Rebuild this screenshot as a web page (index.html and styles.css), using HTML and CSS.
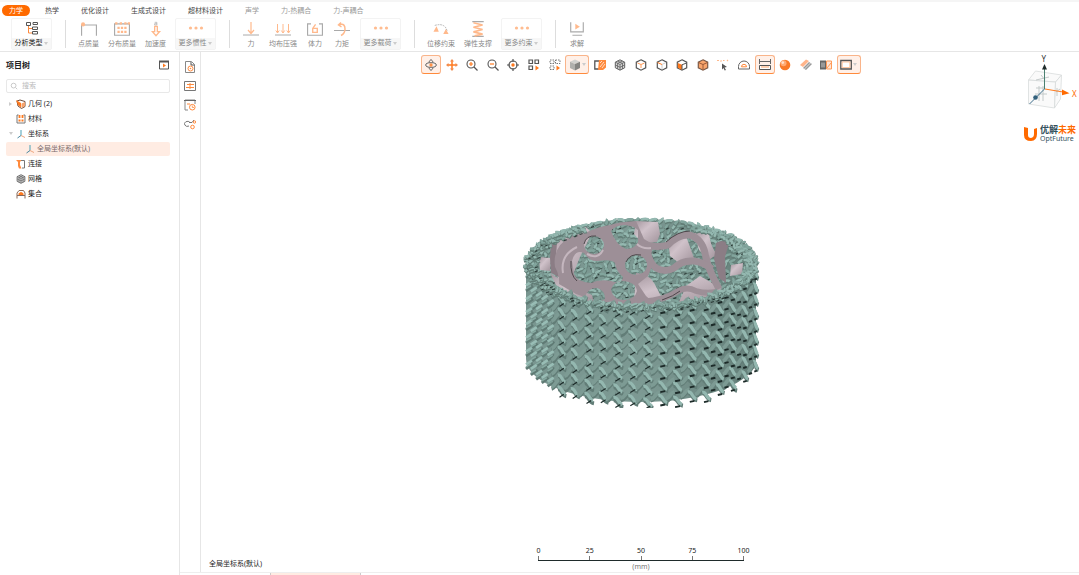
FILE: index.html
```
<!DOCTYPE html>
<html lang="zh-CN">
<head>
  <meta charset="UTF-8" />
  <meta name="viewport" content="width=device-width, initial-scale=1.0" />
  <title>优解未来</title>
  <link rel="stylesheet" href="styles.css">
</head>
<body>
  <!-- icon sprite -->
  <svg class="sprite" aria-hidden="true">
    <symbol id="i-type" viewBox="0 0 14 14"><g fill="none" stroke="#555"><path d="M1.500 1.500h4v3h-4zM8 1.500h4.500v2H8zM7.500 6h5v2.500h-5zM7.500 10.500h5v2.500h-5z"/><path stroke="#ff8a3c" d="M3.500 5v7h3.500M3.500 7.500h3.500"/></g></symbol>
    <symbol id="i-point" viewBox="0 0 14 14"><path d="M.5 13V3.500h13V13" fill="none" stroke="#aaa"/><circle cx="1.800" cy="3" r="1.800" fill="#ffb98c"/></symbol>
    <symbol id="i-dist" viewBox="0 0 14 14"><path d="M.5 12.500v-10h13v10z" fill="none" stroke="#aaa"/><path d="M1 2h2M5 2h2M9 2h2M12 2h2M3 6h2M6 6h2M9 6h2M3 9.500h2M6 9.500h2M9 9.500h2" stroke="#ffb98c" stroke-width="2"/></symbol>
    <symbol id="i-acc" viewBox="0 0 10 18"><path d="M3.500 1.500h2.500v3H3.500v-1.500h2.500" fill="none" stroke="#aaa" stroke-width=".8"/><path d="M3.500 6h3v6H9l-4 4.500L1 12h2.500z" fill="none" stroke="#ffb98c" stroke-width="1.500"/></symbol>
    <symbol id="i-dots" viewBox="0 0 16 14"><g fill="#ffbc90"><circle cx="2.500" cy="7" r="1.600"/><circle cx="8" cy="7" r="1.600"/><circle cx="13.500" cy="7" r="1.600"/></g></symbol>
    <symbol id="i-force" viewBox="0 0 16 14"><path d="M0 13h16" stroke="#aaa"/><path d="M8 0v11M5 8l3 3.500L11 8" fill="none" stroke="#ffb98c" stroke-width="1.200"/></symbol>
    <symbol id="i-press" viewBox="0 0 16 14"><path d="M0 13h16" stroke="#aaa"/><path d="M2.500 2v9M8 2v9M13.500 2v9M.8 8.500l1.700 2.500 1.700-2.500M6.300 8.500L8 11l1.700-2.500M11.800 8.500l1.700 2.500 1.700-2.500" fill="none" stroke="#ffb98c"/></symbol>
    <symbol id="i-body" viewBox="0 0 14 14"><path d="M3.500 2.500h-3v10h13v-10h-3" fill="none" stroke="#aaa"/><path d="M7.500 3L5 6.500v3.500h4V6.500H5.500" fill="none" stroke="#ffb98c" stroke-width="1.200"/></symbol>
    <symbol id="i-moment" viewBox="0 0 16 14"><path d="M0 8.500h16" stroke="#aaa"/><path d="M7 .5L4.500 3l3 2M5 3c5-2 6 1 6 4s-1 5-4 6.500" fill="none" stroke="#ffb98c" stroke-width="1.500"/></symbol>
    <symbol id="i-disp" viewBox="0 0 18 14"><path d="M2 3q8-2.500 12 2l2 4" fill="none" stroke="#aaa" stroke-dasharray="2 1"/><path d="M4 4l2.500 6H.5zM14.500 7l3 5.500h-6z" fill="#ffb98c"/></symbol>
    <symbol id="i-spring" viewBox="0 0 12 14"><path d="M1 .5h10M1 13.500h10" stroke="#aaa"/><path d="M2 1.500l8 2-8 2 8 2-8 2 8 2-7 1.500" fill="none" stroke="#ffb98c" stroke-width="1.400"/></symbol>
    <symbol id="i-solve" viewBox="0 0 14 14"><path d="M1.500 1v8.500h11V1M3 12.500h8.500" fill="none" stroke="#aaa"/><path d="M5.500 2.500v5L9.500 5z" fill="#ffb98c"/></symbol>

    <symbol id="i-play" viewBox="0 0 10 10"><path d="M.5 1.500h9v7.500h-9z" fill="none" stroke="#555"/><path d="M0 1.500h10" stroke="#555" stroke-width="2"/><path d="M4 3.500v4l3-2z" fill="#ff7a1f"/></symbol>
    <symbol id="i-search" viewBox="0 0 10 10"><circle cx="4.500" cy="4.500" r="3" fill="none" stroke="#bbb"/><path d="M7 7l2 2" stroke="#bbb"/></symbol>
    <symbol id="i-geo" viewBox="0 0 10 10"><path d="M1 2l3-1 5 1.500v5L5.500 9.500 2 7z" fill="#fff" stroke="#6d4a38"/><path d="M0 1L5 4v4.500L2 6z" fill="#ff7a1f"/><path d="M5.500 4.500L9 3v4L5.500 9z" fill="#f5a26c"/></symbol>
    <symbol id="i-mat" viewBox="0 0 10 10"><path d="M2.500 1H1v8h8V1H7.500" fill="none" stroke="#777"/><path d="M3.500 1v3M6.500 1v3M2.500 6.500h2M5.500 6.500h2" stroke="#ff7a1f" stroke-width="1.800"/></symbol>
    <symbol id="i-axis" viewBox="0 0 10 10"><path d="M5 1v5.500" stroke="#4aa0b5" fill="none"/><path d="M5 6.500L1.500 9" stroke="#4a87a0"/><path d="M5 6.500L9 8.500" stroke="#f0a880"/></symbol>
    <symbol id="i-link" viewBox="0 0 10 10"><path d="M5 1.500h3.500V9H6" fill="none" stroke="#777"/><path d="M0 1h5.500L4 3v3l1.500 3.500H3L2 7V3z" fill="#ff8a3c"/></symbol>
    <symbol id="i-mesh" viewBox="0 0 12 12"><path d="M6 .8l4.700 2.400v5.600L6 11.200 1.300 8.800V3.200z" fill="#d5d5d5" stroke="#555" stroke-width=".9"/><path d="M1.500 3.200L6 5.500l4.500-2.300M6 5.500V11M3.700 2L8.500 4.400v5.500M8.300 2L3.600 4.400v5.500M1.500 6L6 8.300 10.500 6" fill="none" stroke="#555" stroke-width=".7"/></symbol>
    <symbol id="i-set" viewBox="0 0 10 10"><path d="M1 9.500V4l2-2.500h4.500L9 4v5.500M1 6.500h8" fill="none" stroke="#8a6a5a"/><path d="M2.500 6V4.500q2.500-3 5 0V6z" fill="#ff7a1f"/></symbol>

    <symbol id="i-doc" viewBox="0 0 12 12"><path d="M1.500 11.500V.5h6l3 3v8z" fill="none" stroke="#888"/><path d="M7 1v3h3.500" fill="none" stroke="#555"/><circle cx="6.500" cy="7.500" r="2.500" fill="none" stroke="#ff8a3c"/><circle cx="6.500" cy="7.500" r=".8" fill="#ff8a3c"/></symbol>
    <symbol id="i-table" viewBox="0 0 12 12"><path d="M.5 1.500h11v9H.5z" fill="none" stroke="#777"/><path d="M3 4.500h7M2 7.500h8M6 3v6" stroke="#ff8a3c"/></symbol>
    <symbol id="i-log" viewBox="0 0 12 12"><path d="M11 5V1H1v10h3" fill="none" stroke="#888"/><path d="M0 1.500h12" stroke="#666"/><path d="M3 5h3" stroke="#ff8a3c"/><circle cx="8.300" cy="8.200" r="2.800" fill="none" stroke="#ff8a3c"/><path d="M8.300 6.500v2H10" fill="none" stroke="#ff8a3c" stroke-width=".8"/></symbol>
    <symbol id="i-gear" viewBox="0 0 12 12"><path d="M6 4.500a3 2.500 0 10-1 3.500M5 4.500h3L10 2" fill="none" stroke="#777"/><circle cx="8.500" cy="9" r="1.800" fill="none" stroke="#ff8a3c"/><circle cx="10.500" cy="4" r="1.200" fill="none" stroke="#ff8a3c"/></symbol>

    <symbol id="i-rotate" viewBox="0 0 12 12"><ellipse cx="6" cy="6" rx="5.300" ry="2.300" fill="none" stroke="#666"/><path d="M4 3.500c.8-3.500 3.200-3.500 4 0M4 8.500c.8 3.500 3.200 3.500 4 0" fill="none" stroke="#555"/><path d="M6 4.200v3.600M4.200 6h3.600" stroke="#ff7a1f" stroke-width="1.200"/></symbol>
    <symbol id="i-pan" viewBox="0 0 12 12"><path d="M6 2v8M2 6h8" stroke="#ff7a1f" stroke-width="1.500"/><path d="M6 0l2 2.500H4zM6 12l2-2.500H4zM0 6l2.500-2v4zM12 6L9.500 4v4z" fill="#f08a4c"/></symbol>
    <symbol id="i-zin" viewBox="0 0 12 12"><circle cx="5" cy="5" r="4" fill="none" stroke="#555" stroke-width="1.100"/><path d="M8 8l3.500 3.500" stroke="#555" stroke-width="1.300"/><path d="M3 5h4M5 3v4" stroke="#ff7a1f" stroke-width="1.200"/></symbol>
    <symbol id="i-zout" viewBox="0 0 12 12"><circle cx="5" cy="5" r="4" fill="none" stroke="#555" stroke-width="1.100"/><path d="M8 8l3.500 3.500" stroke="#555" stroke-width="1.300"/><path d="M3 5h4" stroke="#ff7a1f" stroke-width="1.200"/></symbol>
    <symbol id="i-fit" viewBox="0 0 12 12"><circle cx="6" cy="6" r="4" fill="none" stroke="#555" stroke-width="1.200"/><path d="M6 0v3M6 9v3M0 6h3M9 6h3" stroke="#555" stroke-width="1.200"/><circle cx="6" cy="6" r="1.700" fill="#ff7a1f"/></symbol>
    <symbol id="i-sel" viewBox="0 0 12 12"><path d="M1 1h3.500v3.500H1zM7 1h3.500v3.500H7zM1 7h3.500v3.500H1z" fill="none" stroke="#555" stroke-width="1.200"/><path d="M7.500 6.500v5L11 9z" fill="#ff7a1f"/></symbol>
    <symbol id="i-sel2" viewBox="0 0 12 12"><path d="M1 1h4v3.500H1zM6.500 1H11v3.500H6.500zM1 7h4v3.500H1z" fill="none" stroke="#777" stroke-dasharray="1.500 1"/><path d="M7.500 6.500v5L11 9z" fill="#ff7a1f"/></symbol>
    <symbol id="i-solid" viewBox="0 0 12 12"><path d="M6 .5l5 2.300L6 5 1 2.800z" fill="#d2d2ce"/><path d="M1 2.800L6 5v6.500L1 9z" fill="#b0b0ac"/><path d="M11 2.800L6 5v6.500L11 9z" fill="#858581"/></symbol>
    <symbol id="i-section" viewBox="0 0 12 12"><path d="M6 2H.8v8H6" fill="none" stroke="#555" stroke-width="1.300"/><path d="M5 1h7v7.500L9 11H4z" fill="#ff8a3c"/><path d="M6 4l2-2M6 8l4-5M8 9l3-4" stroke="#fff" stroke-width=".7"/></symbol>
    <symbol id="i-cube" viewBox="0 0 12 12"><path d="M6 .8l4.700 2.400v5.600L6 11.200 1.300 8.800V3.200z" fill="#fff" stroke="#555" stroke-width="1.200"/><path d="M2.500 4L6 5.500 9.500 4M6 5.500V9" fill="none" stroke="#ff9a57"/></symbol>
    <symbol id="i-cube2" viewBox="0 0 12 12"><path d="M6 .8l4.700 2.400v5.600L6 11.200 1.300 8.800V3.200z" fill="#fff" stroke="#555" stroke-width="1.200"/><path d="M1.500 3.500L6 5.500" stroke="#ff7a1f"/><path d="M6 5.500l4-2M6 6v4" stroke="#ccc"/></symbol>
    <symbol id="i-cube3" viewBox="0 0 12 12"><path d="M6 .8l4.700 2.400v5.600L6 11.200 1.300 8.800V3.200z" fill="#fff" stroke="#555" stroke-width="1.200"/><path d="M1.800 4L6 5.800V11L1.800 8.800z" fill="#ff7a1f"/><path d="M6 5.800L10.500 4M6 5.800V11" stroke="#555"/></symbol>
    <symbol id="i-cube4" viewBox="0 0 12 12"><path d="M6 .8l4.700 2.400v5.600L6 11.200 1.300 8.800V3.200z" fill="#f9a56c" stroke="#7a5a48" stroke-width="1.200"/><path d="M1.500 3.500L6 5.500l4.500-2M6 5.500V11" fill="none" stroke="#9a5a38"/></symbol>
    <symbol id="i-probe" viewBox="0 0 12 12"><path d="M0 1.500h2M3.500 2.500l1-1M6 1.500h1.500M10 1l1 1" stroke="#ffb98c" stroke-width="1.200"/><path d="M5 4.500l5 3.500-2.500.5L9 11l-1.300.6L6.500 9 5 10.500z" fill="#555"/></symbol>
    <symbol id="i-protr" viewBox="0 0 12 12"><path d="M.5 10V7.500a5.500 5.500 0 0111 0V10z" fill="none" stroke="#666"/><path d="M3.500 7.800a2.500 2.500 0 015 0z" fill="none" stroke="#ff8a3c"/></symbol>
    <symbol id="i-ruler" viewBox="0 0 12 12"><path d="M.5 0v5M11.500 0v5M.5 2.500h11" stroke="#666"/><path d="M.5 6.500h11v4H.5z" fill="#fff" stroke="#555"/><path d="M3 7v2M5 7v2M7 7v2M9 7v2" stroke="#ff8a3c" stroke-width=".8"/></symbol>
    <symbol id="i-ball" viewBox="0 0 12 12"><circle cx="6" cy="6" r="5.300" fill="#f97a28"/><circle cx="4.500" cy="4.300" r="3" fill="#ffab74"/><circle cx="3.800" cy="3.600" r="1.300" fill="#ffe2cf"/></symbol>
    <symbol id="i-clip" viewBox="0 0 12 12"><path d="M0 6l6-5.500L9 2 3 8z" fill="#ffb48a"/><path d="M3 9l6-6 3 2-6 6z" fill="#999"/><path d="M4.500 10l6-6" stroke="#fff" stroke-width=".7"/></symbol>
    <symbol id="i-half" viewBox="0 0 12 12"><path d="M0 1.500h6v9H0z" fill="#666"/><path d="M1 3.500h4v5H1z" fill="#999"/><path d="M6.500 2h5v8h-5z" fill="#ffe5d6" stroke="#ff9a57"/><path d="M7 9l4-5" stroke="#ff9a57"/></symbol>
    <symbol id="i-rect" viewBox="0 0 12 12"><path d="M.8 1.500h10.500v8.500H.8z" fill="none" stroke="#555" stroke-width="1.300"/><path d="M2.200 3h7.600v5.500H2.200z" fill="#fff" stroke="#ffb98c" stroke-width=".8"/></symbol>
  </svg>

  <div class="app">
    <nav class="tabs">
      <button class="tab active">力学</button>
      <button class="tab">热学</button>
      <button class="tab">优化设计</button>
      <button class="tab">生成式设计</button>
      <button class="tab">超材料设计</button>
      <button class="tab" disabled>声学</button>
      <button class="tab" disabled>力-热耦合</button>
      <button class="tab" disabled>力-声耦合</button>
    </nav>

    <div class="ribbon">
      <button class="tool boxed current"><svg><use href="#i-type"/></svg><span>分析类型 <i class="caret"></i></span></button>
      <div class="sep"></div>
      <button class="tool"><svg><use href="#i-point"/></svg><span>点质量</span></button>
      <button class="tool"><svg><use href="#i-dist"/></svg><span>分布质量</span></button>
      <button class="tool"><svg><use href="#i-acc"/></svg><span>加速度</span></button>
      <button class="tool boxed"><svg><use href="#i-dots"/></svg><span>更多惯性 <i class="caret"></i></span></button>
      <div class="sep"></div>
      <button class="tool"><svg><use href="#i-force"/></svg><span>力</span></button>
      <button class="tool"><svg><use href="#i-press"/></svg><span>均布压强</span></button>
      <button class="tool"><svg><use href="#i-body"/></svg><span>体力</span></button>
      <button class="tool"><svg><use href="#i-moment"/></svg><span>力矩</span></button>
      <button class="tool boxed"><svg><use href="#i-dots"/></svg><span>更多载荷 <i class="caret"></i></span></button>
      <div class="sep"></div>
      <button class="tool"><svg><use href="#i-disp"/></svg><span>位移约束</span></button>
      <button class="tool"><svg><use href="#i-spring"/></svg><span>弹性支撑</span></button>
      <button class="tool boxed"><svg><use href="#i-dots"/></svg><span>更多约束 <i class="caret"></i></span></button>
      <div class="sep"></div>
      <button class="tool"><svg><use href="#i-solve"/></svg><span>求解</span></button>
    </div>

    <div class="main">
      <aside class="sidebar">
        <div class="side-head">
          <h2>项目树</h2>
          <button class="icon-btn" aria-label="收起"><svg><use href="#i-play"/></svg></button>
        </div>
        <label class="search">
          <svg><use href="#i-search"/></svg>
          <input type="search" placeholder="搜索" aria-label="搜索" />
        </label>
        <ul class="tree">
          <li><i class="arrow right"></i><svg><use href="#i-geo"/></svg><span>几何 (2)</span></li>
          <li><i class="arrow"></i><svg><use href="#i-mat"/></svg><span>材料</span></li>
          <li><i class="arrow down"></i><svg><use href="#i-axis"/></svg><span>坐标系</span></li>
          <li class="child selected"><i class="arrow"></i><svg><use href="#i-axis"/></svg><span>全局坐标系(默认)</span></li>
          <li><i class="arrow"></i><svg><use href="#i-link"/></svg><span>连接</span></li>
          <li><i class="arrow"></i><svg><use href="#i-mesh"/></svg><span>网格</span></li>
          <li><i class="arrow"></i><svg><use href="#i-set"/></svg><span>集合</span></li>
        </ul>
      </aside>

      <div class="workspace">
        <div class="stage">
          <div class="rail">
            <button class="icon-btn" aria-label="属性"><svg><use href="#i-doc"/></svg></button>
            <button class="icon-btn" aria-label="表格"><svg><use href="#i-table"/></svg></button>
            <button class="icon-btn" aria-label="日志"><svg><use href="#i-log"/></svg></button>
            <button class="icon-btn" aria-label="设置"><svg><use href="#i-gear"/></svg></button>
          </div>

          <section class="viewport">
            <div class="view-tools">
              <button class="vt on" aria-label="旋转"><svg><use href="#i-rotate"/></svg></button>
              <button class="vt" aria-label="平移"><svg><use href="#i-pan"/></svg></button>
              <button class="vt" aria-label="放大"><svg><use href="#i-zin"/></svg></button>
              <button class="vt" aria-label="缩小"><svg><use href="#i-zout"/></svg></button>
              <button class="vt" aria-label="适应"><svg><use href="#i-fit"/></svg></button>
              <button class="vt" aria-label="选择"><svg><use href="#i-sel"/></svg></button>
              <button class="vt" aria-label="框选"><svg><use href="#i-sel2"/></svg></button>
              <button class="vt drop on" aria-label="显示"><svg><use href="#i-solid"/></svg><i class="caret"></i></button>
              <button class="vt" aria-label="剖面"><svg><use href="#i-section"/></svg></button>
              <button class="vt" aria-label="网格"><svg><use href="#i-mesh"/></svg></button>
              <button class="vt" aria-label="点"><svg><use href="#i-cube"/></svg></button>
              <button class="vt" aria-label="线"><svg><use href="#i-cube2"/></svg></button>
              <button class="vt" aria-label="面"><svg><use href="#i-cube3"/></svg></button>
              <button class="vt" aria-label="体"><svg><use href="#i-cube4"/></svg></button>
              <button class="vt" aria-label="坐标"><svg><use href="#i-probe"/></svg></button>
              <button class="vt" aria-label="角度"><svg><use href="#i-protr"/></svg></button>
              <button class="vt on" aria-label="标尺"><svg><use href="#i-ruler"/></svg></button>
              <button class="vt" aria-label="光照"><svg><use href="#i-ball"/></svg></button>
              <button class="vt" aria-label="纹理"><svg><use href="#i-clip"/></svg></button>
              <button class="vt" aria-label="对比"><svg><use href="#i-half"/></svg></button>
              <button class="vt drop on" aria-label="背景"><svg><use href="#i-rect"/></svg><i class="caret"></i></button>
            </div>

            <div class="corner">
              <svg class="gizmo" viewBox="1024 54 54 56">
                <g fill="#f6f7f7" fill-opacity=".6" stroke="#d8dcdc" stroke-width=".8">
                  <path d="M1028.500 80l7-9 26 4-6 7z"/>
                  <path d="M1028.500 80l27 2-1 26-26-4z"/>
                  <path d="M1055.500 82l6-7-1 24-6 9z"/>
                </g>
                <path d="M1036 80l13-3M1041 75l4 5M1036 88h9M1035 94h12M1039 86v15M1043 86v15M1057 88v8M1056 92l4-3" stroke="#c4caca" fill="none"/>
                <path d="M1044.500 89V69" stroke="#4a8070"/>
                <path d="M1044.500 64l2.500 5.500h-5z" fill="#1f2b2b"/>
                <path d="M1045 89l18 3" stroke="#ff7a1f"/>
                <path d="M1062 89.500l7.500 3.700-7.500 2z" fill="#ff6a00"/>
                <path d="M1044.500 89l-15 15" stroke="#3f6f8c"/>
                <circle cx="1035.500" cy="97.500" r="2.300" fill="#33617c"/>
                <text x="1041.500" y="62" font-size="8" fill="#333">Y</text>
                <text x="1072" y="97" font-size="8" fill="#ff6a00">X</text>
              </svg>
              <div class="brand">
                <svg viewBox="0 0 13 14"><path d="M0 0l4 1v7q0 3 3 3 3-.5 3-4V2l3-1v6q0 6.500-6 7-7 0-7-6z" fill="#ff6a00"/></svg>
                <div class="brand-text">
                  <strong>优解<em>未来</em></strong>
                  <small>OptFuture</small>
                </div>
              </div>
            </div>

            <svg class="model" id="model" viewBox="515 214 252 196">
              <defs>
                <linearGradient id="wall" x1="0" x2="1"><stop offset="0" stop-color="#78958f"/><stop offset=".5" stop-color="#7d9993"/><stop offset="1" stop-color="#647f79"/></linearGradient>
                <linearGradient id="lilac" x1="0" x2="1" y2="1"><stop offset="0" stop-color="#a3959d"/><stop offset=".4" stop-color="#d0c2ca"/><stop offset="1" stop-color="#a0929a"/></linearGradient>
              </defs>
              <path fill="url(#wall)" d="M526 266A115 45 0 01756 266V361A115 43 0 01526 361z"/>
              <g id="back"></g>
              <!-- inner lattice surface -->
              <g fill="url(#lilac)">
                <path d="M539 259l12 1-1 13-10-1z"/>
                <path d="M553 245l16-10 17-6 6 6-12 24-8 20-14 2z"/>
                <path d="M636 223l22 1 2 12-3 8-14 2-9-10z"/>
                <path d="M668 243l18-5 8 22-14 6-10-8z"/>
                <path d="M694 234l15 2q2 14 8 20l-8 6-10-10z"/>
                <path d="M731 267l12-2-1 11-12 2z"/>
                <path d="M636 275q12 0 18 10l8 15-28 4zM686 288l14-10 14 8 8 5-15 8-28 5z"/>
                <path d="M550 275l22 14 20 8 2 8-20-7-18-11z"/>
              </g>
              <path fill="#8b7d85" d="M551 247l6-3-1 15 3 20-8-4-1-15zM716 245q6-4 13 0l-4 14 1 26-7-5-5-19z"/>
              <!-- left plate with holes -->
              <path fill="#9d8f97" fill-rule="evenodd" d="M585 235q15-7 25-8 8-3 26-4l8 18 10 6-4 11 2 10-4 10-10 8 8 12 8 7-14 3q-38-2-64-12l-17-10q1-8-4-17-3-20 16-31zM584 247a10 9 0 1020 0 10 9 0 10-20 0M611 233q4-6 14-6 9 1 13 5l0 12q-3 7-12 7-10-4-15-18zM572 263q3-12 12-8 6 9 14 8 14-2 17 2 1 8 8 14-1 8-12 4-12-2-20 2-14-1-17-9zM625 267a11 10 0 1022 0 11 10 0 10-22 0M585 298q5-9 12-8 8 2 8 11l-6 3zM611 292q2-9 12-9 13 1 14 10-2 8-12 9-12 0-14-10z"/>
              <!-- ribbons on the right -->
              <g fill="none" stroke="#9d8f97" stroke-width="7" stroke-linejoin="round">
                <path d="M640 245q16 6 28 2 10-11 22-10 12 4 15 18 2 12 8 24l6 12"/>
                <path d="M648 246q-2 16 8 24 9 5 18 0 8-8 20-7 9 1 18 8"/>
                <path stroke-width="6" d="M634 304q28 0 44-11 9-5 18 0 10 3 20 1"/>
              </g>
              <path fill="none" stroke="#c4b6be" stroke-width="2" d="M563 275q-3-18 14-26M603 252q-5 10-16 4M637 246q5 5 14 4"/>
              <path fill="none" stroke="#4f484c" stroke-width="1" d="M666 244q12-11 24-11M571 263q-1 14 6 20M626 264q4-9 15-7M584 246q2-9 12-8M662 302q12-4 18-9"/>
              <g id="front"></g>
            </svg>

            <div class="view-foot">
              <span class="status">全局坐标系(默认)</span>
              <div class="scale">
                <div class="scale-nums"><span>0</span><span>25</span><span>50</span><span>75</span><span>100</span></div>
                <div class="scale-bar"><i></i><i></i><i></i><i></i><i></i></div>
                <div class="unit">(mm)</div>
              </div>
            </div>
          </section>
        </div>
        <div class="bottom-tabs"><div class="bottom-active"></div></div>
      </div>
    </div>
  </div>

  <script src="model.js"></script>
</body>
</html>
```

FILE: styles.css
```
* {
  box-sizing: border-box;
}
body {
  margin: 0;
  font-family: "Noto Sans", "Noto Sans CJK SC", sans-serif;
  font-size: 7px;
  line-height: 10px;
  color: #222;
  background: #fff;
}
button {
  margin: 0;
  padding: 0;
  border: none;
  background: none;
  font: inherit;
  color: inherit;
  cursor: pointer;
}
svg {
  display: block;
}
.sprite {
  position: absolute;
  width: 0;
  height: 0;
}
.app {
  display: flex;
  flex-direction: column;
  height: 100vh;
  overflow: hidden;
}

/* top tabs */
.tabs {
  display: flex;
  align-items: center;
  gap: 8px;
  height: 17px;
  padding: 2px 2px 0;
  border-top: 2px solid #f5f5f5;
}
.tab {
  height: 11px;
  padding: 0 7px;
  border-radius: 6px;
  color: #444;
  white-space: nowrap;
}
.tab:disabled {
  color: #999;
}
.tab.active {
  background: #ff6a00;
  color: #fff;
}

/* ribbon */
.ribbon {
  display: flex;
  align-items: center;
  gap: 9px;
  height: 35px;
  padding: 0 11px;
  border-bottom: 1px solid #e6e6e6;
}
.sep {
  width: 1px;
  height: 28px;
  margin: 0 3px 0 4px;
  background: #ddd;
}
.tool {
  display: flex;
  flex-direction: column;
  align-items: center;
  justify-content: flex-end;
  min-width: 18px;
  height: 32px;
  color: #888;
  white-space: nowrap;
}
.tool svg {
  width: 16px;
  height: 16px;
  margin-bottom: 2px;
}
.tool span {
  height: 11px;
}
.tool.boxed {
  width: 41px;
  border: 1px solid #f3f3f3;
  border-radius: 2px;
}
.tool.boxed svg {
  height: 14px;
  margin-bottom: 3px;
}
.tool.boxed span {
  width: 100%;
  background: #f7f7f7;
}
.tool.current {
  color: #222;
}
.caret {
  display: inline-block;
  border: 2px solid transparent;
  border-top: 3px solid #ccc;
  border-bottom: 0;
}

/* project tree */
.main {
  display: flex;
  flex: 1;
  min-height: 0;
}
.sidebar {
  width: 180px;
  flex: none;
  padding: 8px 9px 0 6px;
  border-right: 1px solid #e6e6e6;
}
.side-head {
  display: flex;
  align-items: center;
  justify-content: space-between;
  height: 10px;
  padding-right: 1px;
}
.side-head h2 {
  margin: 0;
  font-size: 8px;
  font-weight: bold;
}
.side-head svg {
  width: 10px;
  height: 10px;
}
.search {
  display: flex;
  align-items: center;
  gap: 4px;
  height: 14px;
  margin: 9px 0 4px;
  padding: 0 3px;
  border: 1px solid #e8e8e8;
  border-radius: 2px;
}
.search svg {
  width: 8px;
  height: 8px;
}
.search input {
  flex: 1;
  min-width: 0;
  padding: 0;
  border: none;
  outline: none;
  font: inherit;
}
.search input::placeholder {
  color: #bbb;
}
.tree {
  display: flex;
  flex-direction: column;
  gap: 1px;
  margin: 0;
  padding: 0;
  list-style: none;
}
.tree li {
  display: flex;
  align-items: center;
  height: 14px;
  padding-left: 3px;
  border-radius: 2px;
}
.tree li.child {
  padding-left: 12px;
}
.tree svg {
  width: 10px;
  height: 10px;
  margin: 0 2px;
}
.tree .selected {
  background: #ffece3;
  color: #77696a;
}
.arrow {
  width: 5px;
  height: 4px;
}
.arrow.right::before,
.arrow.down::before {
  content: "";
  display: block;
  width: 0;
  border: 2px solid transparent;
}
.arrow.right::before {
  border-left: 3px solid #ccc;
  border-right: 0;
}
.arrow.down::before {
  border-top: 3px solid #ccc;
  border-bottom: 0;
}

/* workspace */
.workspace {
  display: flex;
  flex: 1;
  flex-direction: column;
  min-width: 0;
}
.stage {
  display: flex;
  flex: 1;
  min-height: 0;
}
.rail {
  display: flex;
  flex-direction: column;
  align-items: center;
  gap: 7px;
  width: 21px;
  padding: 9px 1px 0 0;
  border-right: 1px solid #e6e6e6;
}
.rail svg {
  width: 12px;
  height: 12px;
}
.viewport {
  position: relative;
  display: flex;
  flex: 1;
  flex-direction: column;
  align-items: center;
  justify-content: space-between;
  min-width: 0;
  padding: 3px 0 0 2px;
}
.view-tools {
  display: flex;
  justify-content: space-between;
  width: 50%;
  min-width: 440px;
  max-width: 440px;
}
.vt {
  display: flex;
  align-items: center;
  justify-content: center;
  gap: 1px;
  width: 20px;
  height: 19px;
  border: 1px solid transparent;
  border-radius: 3px;
}
.vt.drop {
  width: 24px;
}
.vt svg {
  width: 12px;
  height: 12px;
}
.vt.on {
  border-color: #f9b48a;
  border-bottom-color: #ff8a3c;
  background: #fff0e8;
}
.model {
  width: 252px;
  height: 196px;
}

/* axis triad and logo lie over the 3D view */
.corner {
  position: absolute;
  top: 2px;
  right: 1px;
}
.gizmo {
  width: 54px;
  height: 56px;
}
.brand {
  display: flex;
  align-items: center;
  gap: 3px;
  margin-top: 15px;
}
.brand svg {
  width: 13px;
  height: 14px;
}
.brand-text {
  display: flex;
  flex-direction: column;
}
.brand strong {
  font-size: 9px;
  line-height: 10px;
  color: #33505c;
}
.brand em {
  font-style: normal;
  color: #ff6a00;
}
.brand small {
  font-size: 7px;
  line-height: 7px;
  color: #33505c;
}

/* status text and ruler */
.view-foot {
  display: grid;
  grid-template-columns: 1fr 218px 1fr;
  align-items: end;
  width: 100%;
}
.status {
  padding: 0 0 3px 6px;
}
.scale-nums {
  display: flex;
  justify-content: space-between;
}
.scale-nums span {
  width: 13px;
  text-align: center;
}
.scale-bar {
  display: flex;
  justify-content: space-between;
  height: 5px;
  margin: 0 6px 1px;
  border-bottom: 1px solid #1f2b2b;
}
.scale-bar i {
  width: 1px;
  background: #777;
}
.unit {
  text-align: center;
  color: #777;
}
.bottom-tabs {
  height: 3px;
  padding-left: 90px;
  border-top: 1px solid #eee;
}
.bottom-active {
  width: 91px;
  height: 2px;
  border: 1px solid #ccc;
  border-width: 0 1px;
  background: #ffece3;
}
```

FILE: model.js
```
// lattice strands of the ring
const CX = 641, RX = 114, RY = 44, TOP = 266, BOTTOM = 361;
let seed = 7;

function rnd() {
  seed = (seed * 16807) % 2147483647;
  return seed / 2147483647;
}

function n(v) {
  return v.toFixed(1);
}

function stroke(d, color, width) {
  return `<path d="${d}" fill="none" stroke="${color}" stroke-width="${n(width)}"/>`;
}

// one twisted piece of the lattice, turned at random
function knot(x, y, s) {
  const a = rnd() * Math.PI;
  const dx = Math.cos(a) * 4 * s, dy = Math.sin(a) * 2.5 * s;
  const light = rnd() > 0.4 ? '#94b8b0' : '#82a59d';
  let out = stroke(`M${n(x - dx)} ${n(y - dy + 1)}q${n(dx + 2)} ${n(dy - 2)} ${n(2 * dx)} ${n(2 * dy)}`, '#627d76', 4 * s);
  out += stroke(`M${n(x - dx)} ${n(y - dy)}q${n(dx + 2)} ${n(dy - 2)} ${n(2 * dx)} ${n(2 * dy)}`, light, 2.8 * s);
  if (rnd() > 0.7) {
    out += stroke(`M${n(x)} ${n(y + 3)}l3 -1`, '#2c3b38', 1.2);
  }
  return out;
}

// top of the ring and what shows through the holes
let back = '';
for (let y = -RY; y <= RY; y += 5) {
  const half = RX * Math.sqrt(1 - (y * y) / (RY * RY));
  for (let x = -half; x <= half; x += 7) {
    back += knot(CX + x + rnd() * 3, TOP + y + rnd() * 2, 0.9);
  }
}
for (let t = 180; t <= 360; t += 4) {
  const r = t * Math.PI / 180;
  back += knot(CX + RX * Math.cos(r), TOP + RY * Math.sin(r), 1);
}
document.getElementById('back').innerHTML = back;

// outer wall, neighbouring columns twist opposite ways
let shade = '', light = '', gaps = '';
let col = 0;
for (let x = -113; x <= 115; x += 4 + 3.5 * Math.sqrt(1 - (x * x) / (116 * 116))) {
  const c = Math.sqrt(1 - (x * x) / (116 * 116));
  const w = 0.45 + 0.55 * c;
  const px = CX + x;
  col++;
  const shift = [0, 5, 2, 8][col % 4];
  const dir = col % 2 ? 1 : -1;
  for (let y = TOP + RY * c + shift - 4; y < BOTTOM + RY * c + 1; y += 13) {
    const j = rnd() * 2 - 1;
    if (x < -90) {
      // flutes seen edge-on
      const fy = y - shift;
      shade += stroke(`M${n(px - 2)} ${n(fy + 8)}l7 -5`, '#5f7a74', 3);
      light += stroke(`M${n(px - 2)} ${n(fy + 3 + j)}l6 -4`, '#98bdb5', 2.6);
      light += stroke(`M${n(px - 2)} ${n(fy + 6)}l5 -3`, '#86a9a1', 1.5);
      continue;
    }
    shade += stroke(`M${n(px - 5 * w)} ${n(y - 4 * dir + 2)}c${n(5 * w)} -1 ${n(4 * w)} ${n(6 * dir)} ${n(10 * w)} ${n(7 * dir)}`, '#627d77', 4);
    light += stroke(`M${n(px - 5 * w)} ${n(y - 4 * dir + j)}c${n(5 * w)} -1 ${n(4 * w)} ${n(6 * dir)} ${n(9 * w)} ${n(7 * dir)}`, dir > 0 ? '#94b8b0' : '#7d9b94', dir > 0 ? 3.2 : 3.8);
    if (dir > 0 || x > 70) {
      const g = x > 15 ? 1.9 : 1.2;
      gaps += stroke(`M${n(px - 3 * w)} ${n(y + 6 + j)}l${n(5 * w)} ${n(x > 15 ? -1 : -3)}`, '#1c2a28', g);
    }
  }
}

// ring lip, thicker at both sides
let lip = '';
for (let t = -60; t <= 240; t += 3.5) {
  const r = t * Math.PI / 180;
  const side = Math.abs(Math.cos(r));
  for (let k = 0; k < 3; k++) {
    const f = 1 - k * 0.035;
    lip += knot(CX + RX * f * Math.cos(r) + rnd() * 2 - 1, TOP + RY * f * Math.sin(r) + rnd() * 2, 0.8 + 0.1 * side);
  }
}
document.getElementById('front').innerHTML = shade + light + gaps + lip;
```
